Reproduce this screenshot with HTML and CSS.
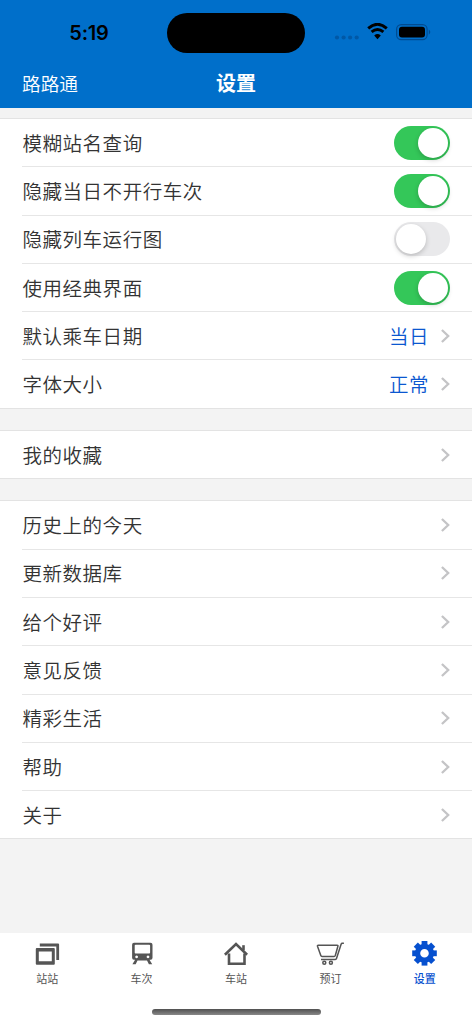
FILE: index.html
```html
<!DOCTYPE html>
<html lang="zh-CN">
<head>
<meta charset="utf-8">
<title>设置</title>
<link rel="stylesheet" href="styles.css">
</head>
<body>
<div class="screen">
  <header class="header">
    <div class="status">
      <span class="time">5:19</span>
      <span class="island"></span>
      <svg class="indicators" width="98" height="20" viewBox="0 0 98 20">
        <g fill="#0058a6"><circle cx="4" cy="14.5" r="2.1"/><circle cx="10.6" cy="14.5" r="2.1"/><circle cx="17.1" cy="14.5" r="2.1"/><circle cx="23.7" cy="14.5" r="2.1"/></g>
        <path d="M35.2 5.300Q44.500-2.700 53.800 5.300M38.600 8.900Q44.500 3.900 50.400 8.900" fill="none" stroke="#000" stroke-width="2.900"/>
        <path d="M41.200 12.500Q44.500 9.700 47.800 12.500L44.500 16.200Z"/>
        <rect x="63.600" y="1.600" width="30.500" height="15" rx="4.600" fill="none" stroke="#004c92" stroke-width="1.200"/>
        <rect x="66" y="3.700" width="26" height="10.700" rx="3"/>
        <path d="M95.800 6.500q3 2.600 0 5.200z" fill="#004c92"/>
      </svg>
    </div>
    <nav class="navbar"><span class="back">路路通</span><h1 class="title">设置</h1><span></span></nav>
  </header>

  <main class="content">
    <section class="group">
      <div class="row"><span>模糊站名查询</span><i class="switch on"></i></div>
      <div class="row"><span>隐藏当日不开行车次</span><i class="switch on"></i></div>
      <div class="row"><span>隐藏列车运行图</span><i class="switch"></i></div>
      <div class="row"><span>使用经典界面</span><i class="switch on"></i></div>
      <div class="row"><span>默认乘车日期</span><span class="value">当日</span><svg class="chevron" viewBox="0 0 9 14"><path d="M.9 1 7.200 7 .9 13"/></svg></div>
      <div class="row"><span>字体大小</span><span class="value">正常</span><svg class="chevron" viewBox="0 0 9 14"><path d="M.9 1 7.200 7 .9 13"/></svg></div>
    </section>
    <section class="group">
      <div class="row"><span>我的收藏</span><svg class="chevron" viewBox="0 0 9 14"><path d="M.9 1 7.200 7 .9 13"/></svg></div>
    </section>
    <section class="group">
      <div class="row"><span>历史上的今天</span><svg class="chevron" viewBox="0 0 9 14"><path d="M.9 1 7.200 7 .9 13"/></svg></div>
      <div class="row"><span>更新数据库</span><svg class="chevron" viewBox="0 0 9 14"><path d="M.9 1 7.200 7 .9 13"/></svg></div>
      <div class="row"><span>给个好评</span><svg class="chevron" viewBox="0 0 9 14"><path d="M.9 1 7.200 7 .9 13"/></svg></div>
      <div class="row"><span>意见反馈</span><svg class="chevron" viewBox="0 0 9 14"><path d="M.9 1 7.200 7 .9 13"/></svg></div>
      <div class="row"><span>精彩生活</span><svg class="chevron" viewBox="0 0 9 14"><path d="M.9 1 7.200 7 .9 13"/></svg></div>
      <div class="row"><span>帮助</span><svg class="chevron" viewBox="0 0 9 14"><path d="M.9 1 7.200 7 .9 13"/></svg></div>
      <div class="row"><span>关于</span><svg class="chevron" viewBox="0 0 9 14"><path d="M.9 1 7.200 7 .9 13"/></svg></div>
    </section>
  </main>

  <footer class="footer">
    <nav class="tabs">
      <div class="tab">
        <svg class="icon" viewBox="0 0 30 30"><path fill-rule="evenodd" d="M4.800 9h17q1 0 1 1v14.700q0 1-1 1h-17q-1 0-1-1V10q0-1 1-1ZM6.800 12.500v9.800h13v-9.800Z"/><path d="M7.800 4.500h18.300q1 0 1 1v15.500h-2.800V7.500H7.800Z"/></svg>
        <span>站站</span>
      </div>
      <div class="tab">
        <svg class="icon" viewBox="0 0 30 30"><path fill-rule="evenodd" d="M7 3.700h16.500q2 0 2 2v13q0 2-1.800 2h-1.200l2.700 4.500h-3.300L20 21.500h-9.500L8.700 25.200H5.400l2.700-4.500H6.900q-1.800 0-1.800-2v-13q0-2 1.900-2ZM8.600 5.700q-.9 0-.9.900v6.900q0 .9.900.9h13.600q.9 0 .9-.9V6.600q0-.9-.9-.9ZM9.600 16.500a1.400 1.400 0 1 0 .01 0ZM21 16.500a1.400 1.400 0 1 0 .01 0Z"/></svg>
        <span>车次</span>
      </div>
      <div class="tab">
        <svg class="icon" viewBox="0 0 30 30"><g class="house"><path d="M3.900 15.700 15 5l11.100 10.700"/><path d="M8 14.500v10.200h15.500V14.500"/><path d="M22.500 6.200v5"/></g></svg>
        <span>车站</span>
      </div>
      <div class="tab">
        <svg class="icon" viewBox="0 0 30 30"><g class="cart"><path d="M3.300 6.300h18.900q1 0 .7 1l-2.600 9.200q-.3.900-1.200.9H7q-.9 0-1.200-.9L2.500 7.300q-.3-1 .8-1Z"/><path d="M28.900 4.300h-1.600q-.9 0-1.200.9l-4.600 14.300q-.3.900-1.200.9H6"/><circle cx="9.300" cy="23.800" r="1.500"/><circle cx="15.900" cy="23.800" r="1.500"/></g></svg>
        <span>预订</span>
      </div>
      <div class="tab active">
        <svg class="icon" viewBox="0 0 30 30"><g transform="translate(14.500 14.300)"><circle r="6.900" fill="none" stroke="currentColor" stroke-width="5.200"/><path id="tooth" d="M-2.900-8v-4.300h5.800v4.300Z"/><use href="#tooth" transform="rotate(45)"/><use href="#tooth" transform="rotate(90)"/><use href="#tooth" transform="rotate(135)"/><use href="#tooth" transform="rotate(180)"/><use href="#tooth" transform="rotate(225)"/><use href="#tooth" transform="rotate(270)"/><use href="#tooth" transform="rotate(315)"/></g></svg>
        <span>设置</span>
      </div>
    </nav>
    <div class="home-indicator"></div>
  </footer>
</div>
</body>
</html>
```
FILE: styles.css
```css
* { box-sizing: border-box; }
body { margin: 0; font-family: "Noto Sans CJK SC", sans-serif; color: #333; }
.screen { width: 472px; height: 1024px; display: flex; flex-direction: column; background: #f3f3f3; overflow: hidden; }

.header { height: 107.5px; flex: none; background: #006fca; }
.status { height: 60px; display: grid; grid-template-columns: 167px 138px 167px; align-items: start; }
.time { padding: 21px 0 0 11px; text-align: center; font: 600 20px/24px Inter, sans-serif; letter-spacing: -.2px; color: #000; }
.island { height: 40px; margin-top: 13px; border-radius: 20px; background: #000; }
.indicators { margin: 23px 0 0 28px; }
.navbar { display: grid; grid-template-columns: 1fr auto 1fr; align-items: center; height: 46px; padding: 0 22px; color: #fff; }
.back { font-size: 18.7px; line-height: 28px; font-weight: 350; }
.title { margin: 0; font-size: 20px; font-weight: 700; line-height: 28px; }

.content { flex: 1; padding-top: 10.5px; display: flex; flex-direction: column; gap: 21.3px; }
.group { background: #fff; border: 1px solid #e3e3e3; border-width: 1px 0; }
.row { display: flex; align-items: center; height: 48.3px; margin-left: 22px; padding-right: 22px; border-bottom: 1px solid #e6e6e6; font-size: 19.5px; font-weight: 350; letter-spacing: .55px; line-height: 28px; }
.row:last-child { border-bottom: 0; height: 47.2px; }
.row > :first-child { padding-left: .4px; }
.row > :nth-child(2) { margin-left: auto; }
.value { color: #0b57d0; }
.switch { width: 56px; height: 34px; padding: 2px; border-radius: 17px; background: #e9e9eb; }
.switch::before { content: ""; display: block; width: 30px; height: 30px; border-radius: 50%; background: #fff; box-shadow: 0 2px 5px #0003; }
.switch.on { background: #34c759; }
.switch.on::before { margin-left: auto; }
.chevron { width: 9px; height: 14px; flex: none; fill: none; stroke: #c4c4c6; stroke-width: 2.3; overflow: visible; }
.value + .chevron { margin-left: 12px; }

.footer { height: 91.5px; flex: none; background: #fff; display: flex; flex-direction: column; align-items: center; justify-content: space-between; padding: 6.5px 0 9px; }
.tabs { width: 100%; display: grid; grid-template-columns: repeat(5, 1fr); }
.tab { display: flex; flex-direction: column; align-items: center; color: #555; font-size: 11px; line-height: 18px; font-weight: 400; }
.tab.active { color: #0650cf; font-weight: 500; }
.icon { width: 30px; height: 30px; fill: currentColor; }
.house { fill: none; stroke: currentColor; stroke-width: 2.6; }
.cart { fill: none; stroke: currentColor; stroke-width: 1.5; }
.home-indicator { width: 169px; height: 6px; border-radius: 3px; background: linear-gradient(#505050, #888); }
```
